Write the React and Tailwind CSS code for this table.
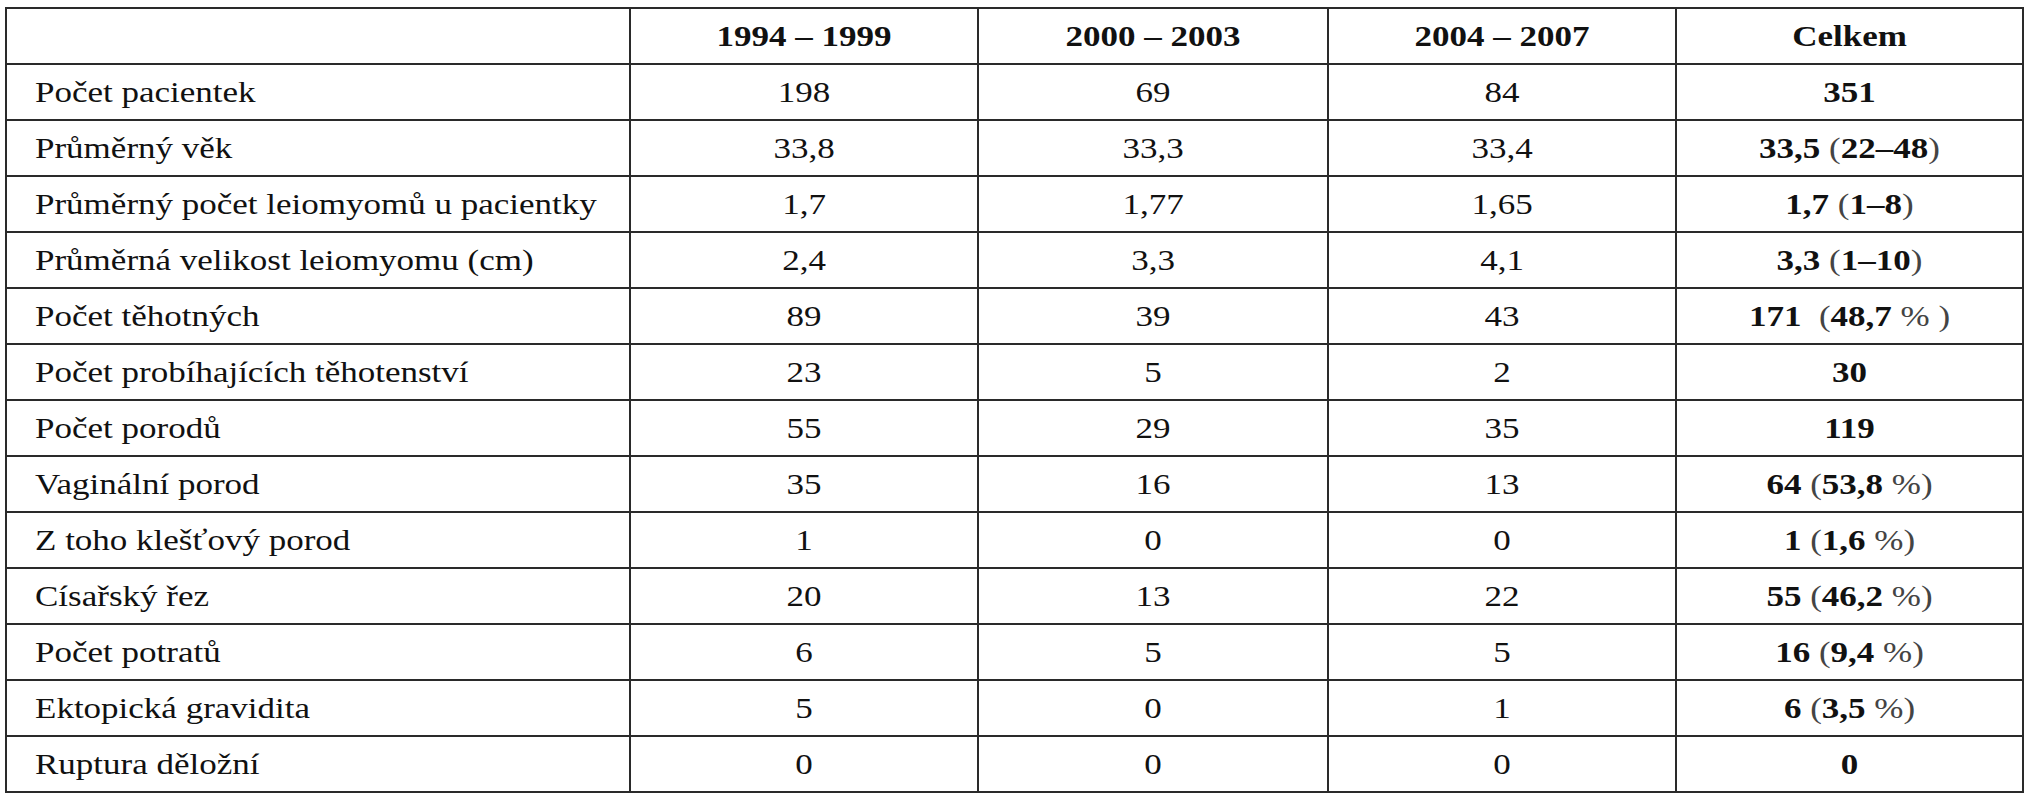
import { Fragment } from "react";

const header = ["", "1994 – 1999", "2000 – 2003", "2004 – 2007", "Celkem"];

// last column: list of [text, bold] pieces
const rows = [
  ["Počet pacientek", "198", "69", "84", [["351", true]]],
  ["Průměrný věk", "33,8", "33,3", "33,4", [["33,5 ", true], ["(", false], ["22–48", true], [")", false]]],
  ["Průměrný počet leiomyomů u pacientky", "1,7", "1,77", "1,65", [["1,7 ", true], ["(", false], ["1–8", true], [")", false]]],
  ["Průměrná velikost leiomyomu (cm)", "2,4", "3,3", "4,1", [["3,3 ", true], ["(", false], ["1–10", true], [")", false]]],
  ["Počet těhotných", "89", "39", "43", [["171\u00a0\u00a0", true], ["(", false], ["48,7", true], ["\u00a0%\u00a0)", false]]],
  ["Počet probíhajících těhotenství", "23", "5", "2", [["30", true]]],
  ["Počet porodů", "55", "29", "35", [["119", true]]],
  ["Vaginální porod", "35", "16", "13", [["64 ", true], ["(", false], ["53,8", true], ["\u00a0%)", false]]],
  ["Z toho klešťový porod", "1", "0", "0", [["1 ", true], ["(", false], ["1,6", true], ["\u00a0%)", false]]],
  ["Císařský řez", "20", "13", "22", [["55 ", true], ["(", false], ["46,2", true], ["\u00a0%)", false]]],
  ["Počet potratů", "6", "5", "5", [["16 ", true], ["(", false], ["9,4", true], ["\u00a0%)", false]]],
  ["Ektopická gravidita", "5", "0", "1", [["6 ", true], ["(", false], ["3,5", true], ["\u00a0%)", false]]],
  ["Ruptura děložní", "0", "0", "0", [["0", true]]],
];

const Txt = ({ children }) => (
  <span className="inline-block scale-y-[0.84] whitespace-pre">{children}</span>
);

export default function App() {
  return (
    <div className="min-h-[800px] w-[2028px] bg-white pl-[5px] pt-[7px] font-['Liberation_Serif','Times_New_Roman',serif] text-[35px] leading-none text-[#111]">
      <div className="grid w-[2019px] grid-cols-[622px_346px_348px_346px_345px] auto-rows-[54px] gap-[2px] bg-[#2a2a2a] p-[2px]">
        {header.map((h, i) => (
          <div key={i} className="flex items-center justify-center bg-white font-bold">
            <Txt>{h}</Txt>
          </div>
        ))}
        {rows.map((r) => (
          <Fragment key={r[0]}>
            <div className="flex items-center bg-white pl-[28px]">
              <Txt>{r[0]}</Txt>
            </div>
            {r.slice(1, 4).map((v, j) => (
              <div key={j} className="flex items-center justify-center bg-white">
                <Txt>{v}</Txt>
              </div>
            ))}
            <div className="flex items-center justify-center bg-white">
              <Txt>
                {r[4].map(([t, b], k) => (
                  <span key={k} className={b ? "font-bold" : "font-normal text-[#444]"}>
                    {t}
                  </span>
                ))}
              </Txt>
            </div>
          </Fragment>
        ))}
      </div>
    </div>
  );
}
